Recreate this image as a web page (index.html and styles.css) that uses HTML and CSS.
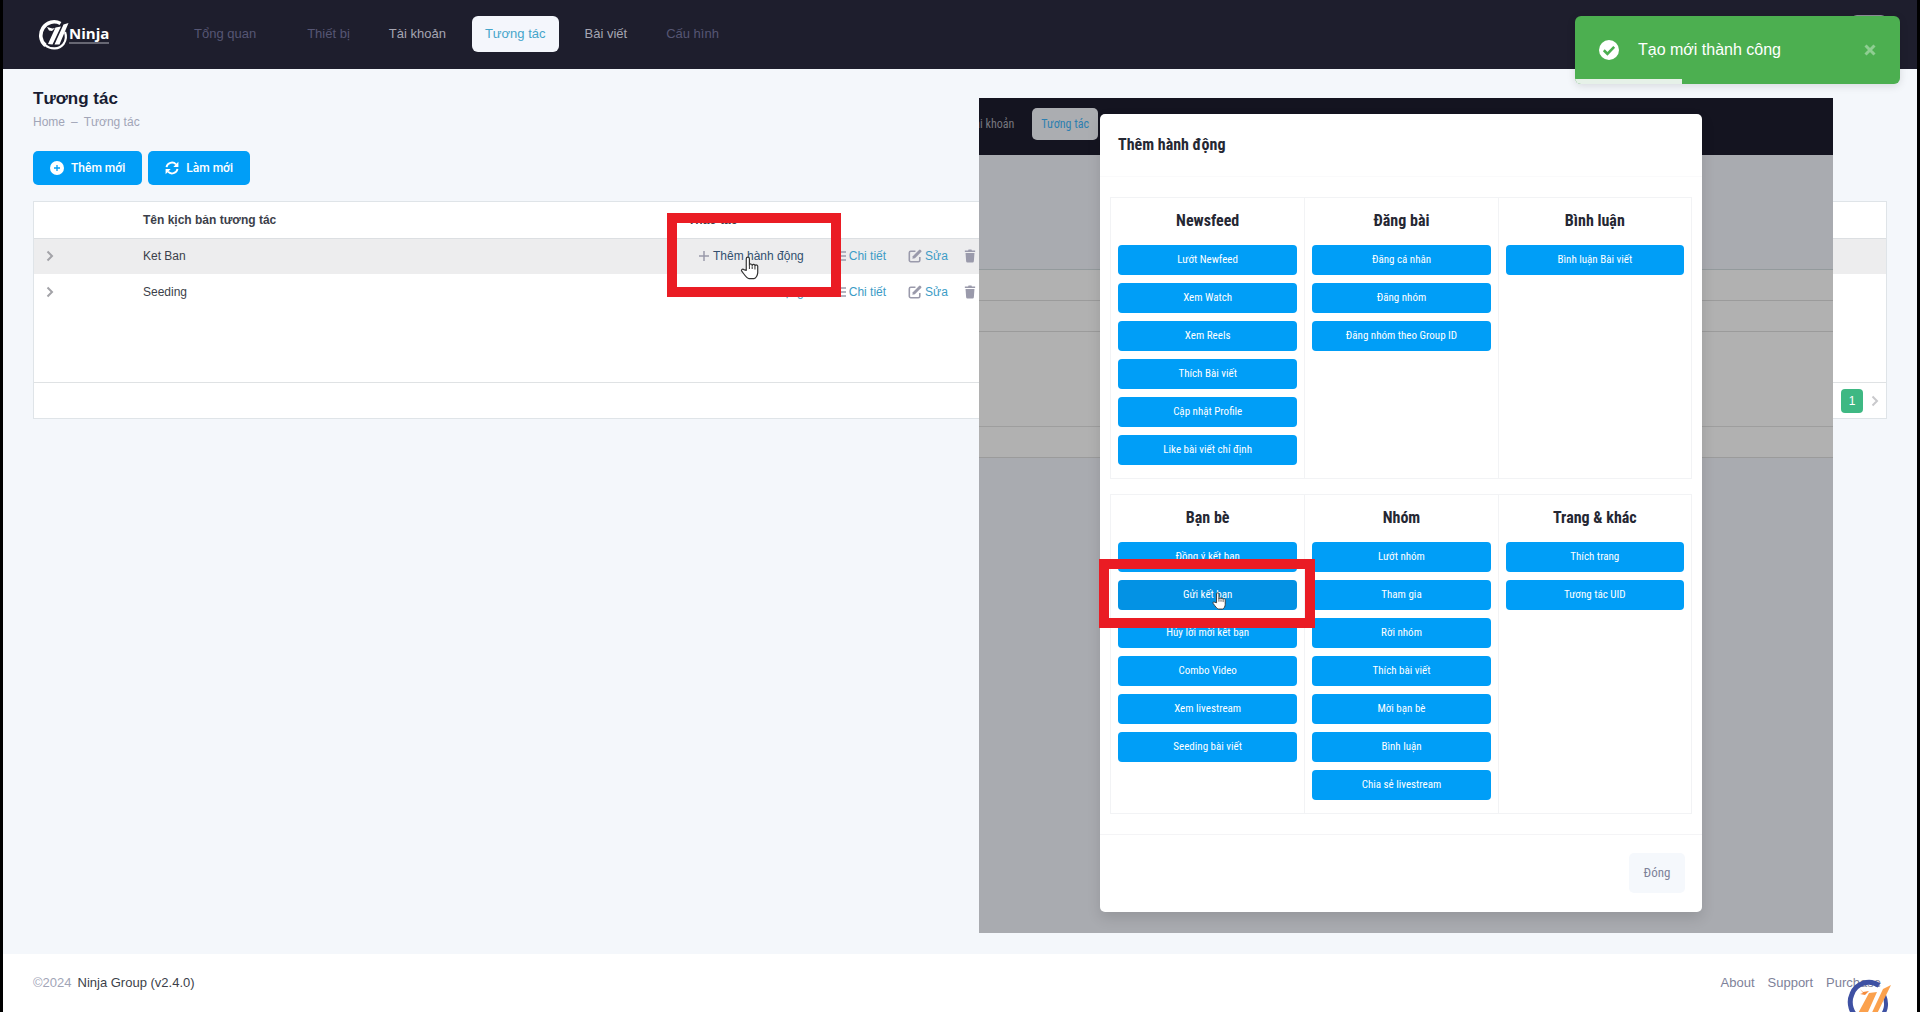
FILE: index.html
```html
<!DOCTYPE html>
<html lang="vi">
<head>
<meta charset="utf-8">
<title>Tương tác</title>
<meta name="viewport" content="width=device-width, initial-scale=1">
<link rel="stylesheet" href="styles.css">
</head>
<body>
<svg class="defs" aria-hidden="true">
  <symbol id="plus" viewBox="0 0 12 12"><path d="M6 1v10M1 6h10" fill="none" stroke="currentColor" stroke-width="1.5"/></symbol>
  <symbol id="list" viewBox="0 0 12 12"><path d="M0 2h2M4 2h8M0 6h2M4 6h8M0 10h2M4 10h8" fill="none" stroke="currentColor" stroke-width="1.6"/></symbol>
  <symbol id="edit" viewBox="0 0 16 16"><path d="M8.500 2.500H3.200A1.700 1.700 0 0 0 1.500 4.200v8.600a1.700 1.700 0 0 0 1.700 1.700h8.600a1.700 1.700 0 0 0 1.700-1.700V9" fill="none" stroke="currentColor" stroke-width="1.800"/><path d="M5.500 8.200 12.600 1.100a1.300 1.300 0 0 1 1.800 0l.6.6a1.300 1.300 0 0 1 0 1.800L7.900 10.600l-2.900.6z" fill="currentColor"/></symbol>
  <symbol id="trash" viewBox="0 0 14 16"><path d="M1 1.500h3.800L5.300.5h3.400l.5 1H13v1.800H1zM1.800 4.500h10.400l-.7 9.600a1.500 1.500 0 0 1-1.500 1.400H4a1.500 1.500 0 0 1-1.500-1.400z" fill="currentColor"/></symbol>
  <symbol id="chevron" viewBox="0 0 8 12"><path d="M1.500 1.500 6 6l-4.500 4.500" fill="none" stroke="currentColor" stroke-width="2"/></symbol>
  <symbol id="hand" viewBox="0 0 20 26"><path d="M6.500 15.500V3a1.700 1.700 0 0 1 3.400 0v7a1.500 1.500 0 0 1 3 .3 1.500 1.500 0 0 1 3 .6 1.500 1.500 0 0 1 3 .8v6.300c0 2.500-2 6.500-4 6.500H9.500C7 24.500 4 19.500 1.600 16.400c-1-1.400.9-2.800 2.200-1.700z" fill="#fff" stroke="#333" stroke-width="1.300" stroke-linejoin="round"/><path d="M9.900 10v4M12.900 11v3M15.900 11.500v3" stroke="#333" stroke-width="1.100"/></symbol>
</svg>

<header class="topbar">
  <a class="logo" href="#" aria-label="Ninja">
    <svg width="31" height="32" viewBox="0 0 31 32" aria-hidden="true">
      <path d="M22.500 4.500A13 13 0 0 0 5 9C1.500 14.500 2 22 7.500 26.500" fill="none" stroke="#fff" stroke-width="3.600"/>
      <path d="M7 26c6 5 14 4.500 18.500-1 2.500-3.500 3-8 1.500-12" fill="none" stroke="#fff" stroke-width="2.200"/>
      <path d="M10 25 17.500 8.500l5.500-1L14.500 25.500zM16.500 25.500 25.500 5.500l5-1.500L21.500 25.500z" fill="#fff"/>
      <path d="m9 8 5.500 1.500 2.500-.5-3 3-3-.5z" fill="#fff"/>
    </svg>
    <span class="logo-name">Ninja</span>
  </a>
  <nav class="nav">
    <a class="dim" href="#">Tổng quan</a>
    <a class="dim" href="#">Thiết bị</a>
    <a href="#">Tài khoản</a>
    <a class="active" href="#">Tương tác</a>
    <a href="#">Bài viết</a>
    <a class="dim" href="#">Cấu hình</a>
  </nav>
  <span class="avatar"></span>
</header>

<main class="content">
  <h1>Tương tác</h1>
  <p class="crumbs"><a href="#">Home</a><span>–</span><span>Tương tác</span></p>
  <div class="toolbar">
    <button class="btn" type="button">
      <svg width="14" height="14" viewBox="0 0 14 14" aria-hidden="true"><circle cx="7" cy="7" r="7" fill="#fff"/><path d="M7 4v6M4 7h6" stroke="#009ef7" stroke-width="1.300"/></svg>
      Thêm mới
    </button>
    <button class="btn" type="button">
      <svg width="14" height="14" viewBox="0 0 14 14" aria-hidden="true"><path d="M1.500 6.200A5.600 5.600 0 0 1 11 3.300M12.500 7.800A5.600 5.600 0 0 1 3 10.700" fill="none" stroke="#fff" stroke-width="1.900"/><path d="M13.400.8v5.100H8.300zM.6 13.200V8.100h5.100z" fill="#fff"/></svg>
      Làm mới
    </button>
  </div>

  <section class="panel">
    <div class="panel-body">
      <table class="grid">
        <thead>
          <tr><th class="c-open"></th><th class="c-name">Tên kịch bản tương tác</th><th>Thao tác</th></tr>
        </thead>
        <tbody>
          <tr class="hover">
            <td class="c-open"><svg width="8" height="12"><use href="#chevron"/></svg></td>
            <td>Ket Ban</td>
            <td><div class="actions">
              <a class="add strong" href="#"><svg width="12" height="12"><use href="#plus"/></svg>Thêm hành động</a>
              <a class="more" href="#"><svg width="12" height="12"><use href="#list"/></svg>Chi tiết</a>
              <a href="#"><svg width="14" height="14"><use href="#edit"/></svg>Sửa</a>
              <a class="remove" href="#" aria-label="Xóa"><svg width="12" height="14"><use href="#trash"/></svg></a>
            </div></td>
          </tr>
          <tr>
            <td class="c-open"><svg width="8" height="12"><use href="#chevron"/></svg></td>
            <td>Seeding</td>
            <td><div class="actions">
              <a class="add" href="#"><svg width="12" height="12"><use href="#plus"/></svg>Thêm hành động</a>
              <a class="more" href="#"><svg width="12" height="12"><use href="#list"/></svg>Chi tiết</a>
              <a href="#"><svg width="14" height="14"><use href="#edit"/></svg>Sửa</a>
              <a class="remove" href="#" aria-label="Xóa"><svg width="12" height="14"><use href="#trash"/></svg></a>
            </div></td>
          </tr>
        </tbody>
      </table>
    </div>
    <div class="pager">
      <button class="page-now" type="button">1</button>
      <button class="page-next" type="button" aria-label="Trang sau"><svg width="8" height="12"><use href="#chevron"/></svg></button>
    </div>
  </section>
</main>

<footer class="footer">
  <p><span class="year">©2024</span><a href="#">Ninja Group (v2.4.0)</a></p>
  <nav class="foot-nav"><a href="#">About</a><a href="#">Support</a><a href="#">Purchase</a></nav>
</footer>

<svg class="brand" width="46" height="46" viewBox="0 0 46 46" aria-hidden="true">
  <path d="M33 6.500A18 18 0 0 0 6 15C2 24 5 35 14 40" fill="none" stroke="#3e51a3" stroke-width="5"/>
  <path d="M38 16c4 9 2 18-5 23" fill="none" stroke="#3e51a3" stroke-width="4"/>
  <path d="m9 40 14-26 8-1L18 42zM22 42 37 10l8-4-18 37z" fill="#fba14d"/>
  <path d="m14 10 3 3 6-1-4 4-5-1 3-1z" fill="#f58a3c"/>
</svg>

<section class="inset">
  <div class="inset-top">
    <nav class="inset-nav"><a href="#">ài khoản</a><a class="active" href="#">Tương tác</a></nav>
  </div>
  <div class="inset-page">
    <div class="inset-space"></div>
    <div class="inset-table">
      <div class="row"></div><div class="row"></div><div class="rows"></div><div class="row"></div>
    </div>
  </div>

  <div class="modal" role="dialog" aria-labelledby="modal-title">
    <h2 id="modal-title">Thêm hành động</h2>
    <div class="modal-body">
      <div class="group">
        <div class="col">
          <h3>Newsfeed</h3>
          <button type="button">Lướt Newfeed</button>
          <button type="button">Xem Watch</button>
          <button type="button">Xem Reels</button>
          <button type="button">Thích Bài viết</button>
          <button type="button">Cập nhật Profile</button>
          <button type="button">Like bài viết chỉ định</button>
        </div>
        <div class="col">
          <h3>Đăng bài</h3>
          <button type="button">Đăng cá nhân</button>
          <button type="button">Đăng nhóm</button>
          <button type="button">Đăng nhóm theo Group ID</button>
        </div>
        <div class="col">
          <h3>Bình luận</h3>
          <button type="button">Bình luận Bài viết</button>
        </div>
      </div>
      <div class="group">
        <div class="col">
          <h3>Bạn bè</h3>
          <button type="button">Đồng ý kết bạn</button>
          <button class="hovered" type="button">Gửi kết bạn</button>
          <button type="button">Hủy lời mời kết bạn</button>
          <button type="button">Combo Video</button>
          <button type="button">Xem livestream</button>
          <button type="button">Seeding bài viết</button>
        </div>
        <div class="col">
          <h3>Nhóm</h3>
          <button type="button">Lướt nhóm</button>
          <button type="button">Tham gia</button>
          <button type="button">Rời nhóm</button>
          <button type="button">Thích bài viết</button>
          <button type="button">Mời bạn bè</button>
          <button type="button">Bình luận</button>
          <button type="button">Chia sẻ livestream</button>
        </div>
        <div class="col">
          <h3>Trang &amp; khác</h3>
          <button type="button">Thích trang</button>
          <button type="button">Tương tác UID</button>
        </div>
      </div>
    </div>
    <div class="modal-foot"><button type="button">Đóng</button></div>
  </div>
</section>

<div class="mark mark-row"></div>
<svg class="hand hand-row" width="19" height="24"><use href="#hand"/></svg>
<div class="mark mark-modal"></div>
<svg class="hand hand-modal" width="14" height="20"><use href="#hand"/></svg>

<div class="toast" role="status">
  <svg width="20" height="20" viewBox="0 0 20 20" aria-hidden="true"><circle cx="10" cy="10" r="10" fill="#fff"/><path d="m4.800 10.300 3.600 3.500 6.800-7" fill="none" stroke="#4caf50" stroke-width="2.600"/></svg>
  <span class="toast-text">Tạo mới thành công</span>
  <button class="toast-close" type="button" aria-label="Đóng"><svg width="12" height="12" viewBox="0 0 12 12"><path d="m1.500 1.500 9 9m0-9-9 9" stroke="currentColor" stroke-width="3"/></svg></button>
</div>
</body>
</html>
```
FILE: styles.css
```css
* { box-sizing: border-box; }
html { background: #000; }
body {
  position: relative;
  display: flex;
  flex-direction: column;
  min-height: 100vh;
  margin: 0;
  border: solid #000;
  border-width: 0 3px;
  overflow: hidden;
  background: #f4f7fb;
  color: #3c3f4a;
  font: 12px/18px "Liberation Sans", Arial, sans-serif;
}
a { color: inherit; text-decoration: none; }
button { border: 0; padding: 0; font: inherit; color: inherit; cursor: pointer; }
svg { flex: none; }
.defs { position: absolute; width: 0; height: 0; }

/* top bar */
.topbar {
  display: flex;
  align-items: center;
  height: 69px;
  padding: 0 30px 0 35px;
  background: #1e1e2d;
}
.logo { display: flex; align-items: center; width: 143px; color: #fff; }
.logo-name {
  border-bottom: 2px solid #676773;
  font: 700 15px/17px "Open Sans", sans-serif;
}
.nav { display: flex; gap: 13px; margin-top: -2px; font-size: 13px; color: #a5a5b2; }
.nav a { padding: 9px 13px; border-radius: 6px; }
.nav .dim { color: #565674; }
.nav .dim + .dim { margin-left: 12px; }
.nav .active { background: #f4f6fc; color: #45a5cb; }
.avatar { width: 36px; height: 40px; margin-left: auto; border-radius: 6px; background: #8d8d98; }

/* page content */
.content { flex: 1; padding: 18px 30px; }
h1 { margin: 0; font-size: 17px; line-height: 24px; color: #181c32; }
.crumbs { display: flex; gap: 6px; margin: 2px 0 20px; color: #a1a5b7; }
.toolbar { display: flex; gap: 6px; margin-bottom: 16px; }
.btn {
  display: flex;
  align-items: center;
  gap: 7px;
  height: 34px;
  padding: 0 17px;
  border-radius: 5px;
  background: #009ef7;
  color: #fff;
  font: 500 12px/18px Roboto, sans-serif;
}
.panel { border: 1px solid #dfe4e8; background: #fff; }
.panel-body { min-height: 180px; }
.grid { width: 100%; border-collapse: collapse; table-layout: fixed; }
.grid th, .grid td { height: 36px; padding: 0; text-align: left; }
.grid thead th { border-bottom: 1px solid #dcdfe2; }
.grid .c-open { width: 109px; padding-left: 12px; color: #a3a3a8; }
.grid .c-open svg, .pager svg { display: block; }
.c-name { width: 545px; }
.hover { background: #ededee; }
.actions { display: flex; gap: 22px; padding-left: 10px; color: #3c9cc6; }
.actions a { display: flex; align-items: center; gap: 3px; }
.actions svg { color: #9a9aab; }
.actions .strong { color: #33506f; }
.actions .more { margin-left: 8px; }
.actions .remove { margin-left: -6px; }
.pager {
  display: flex;
  justify-content: flex-end;
  align-items: center;
  gap: 8px;
  height: 36px;
  padding-right: 7px;
  border-top: 1px solid #dfe2e4;
}
.page-now { width: 22px; height: 24px; border-radius: 4px; background: #3eb883; color: #fff; }
.page-next { background: none; color: #c9c9cc; }

.footer {
  display: flex;
  justify-content: space-between;
  align-items: center;
  height: 58px;
  padding: 0 36px 0 30px;
  background: #fff;
  font-size: 13px;
}
.footer p { display: flex; gap: 6px; margin: 0; }
.year { color: #a1a5b7; }
.foot-nav { display: flex; gap: 13px; color: #7e8299; }
.brand { position: absolute; right: 25px; bottom: -13px; }

/* second window laid over the page */
.inset {
  position: absolute;
  left: 976px;
  top: 98px;
  display: flex;
  flex-direction: column;
  width: 854px;
  height: 835px;
  overflow: hidden;
  background: #a9abb0;
  font: 11px/16px "Roboto Condensed", Roboto, sans-serif;
}
.inset-top { height: 57px; padding-top: 10px; background: #141420; }
.inset-nav {
  display: flex;
  justify-content: flex-end;
  align-items: center;
  gap: 18px;
  width: 119px;
  font-size: 12px;
  white-space: nowrap;
  color: #77777f;
}
.inset-nav .active { padding: 8px 9px; border-radius: 5px; background: #abadb1; color: #2d7fb0; }
.inset-space { height: 114px; }
.inset-table { border-top: 1px solid #939a9c; background: #b1b1b1; }
.inset-table .row { height: 31px; border-bottom: 1px solid #9b9b9b; }
.inset-table .rows { height: 95px; border-bottom: 1px solid #9e9e9e; }

.modal {
  position: absolute;
  left: 121px;
  top: 16px;
  width: 602px;
  border-radius: 5px;
  background: #fff;
  box-shadow: 0 6px 14px rgba(0, 0, 0, .12);
  color: #252733;
}
.modal h2 { margin: 0; padding: 19px 18px; border-bottom: 1px solid #fafafb; font-size: 16px; line-height: 24px; }
.modal-body { display: grid; gap: 15px; padding: 20px 10px; }
.group { display: grid; grid-template-columns: repeat(3, 1fr); border: 1px solid #f2f3f5; }
.col { display: flex; flex-direction: column; gap: 8px; padding: 11px 7px 13px; }
.col + .col { border-left: 1px solid #f2f3f5; }
.col h3 { margin: 0 0 4px; font-size: 16px; line-height: 24px; text-align: center; }
.col button { height: 30px; border-radius: 4px; background: #009ef7; color: #fff; }
.col .hovered { background: #0392e4; }
.modal-foot { display: flex; justify-content: flex-end; padding: 18px 17px 19px; border-top: 1px solid #f4f4f6; }
.modal-foot button { width: 56px; height: 40px; border-radius: 5px; background: #f5f8fc; color: #7e8299; font-size: 13px; }

/* call-outs and pointers */
.mark { position: absolute; border: 10px solid #ea1c24; }
.mark-row { left: 664px; top: 213px; width: 174px; height: 84px; }
.mark-modal { left: 1096px; top: 559px; width: 216px; height: 69px; }
.hand { position: absolute; }
.hand-row { left: 737px; top: 256px; }
.hand-modal { left: 1209px; top: 591px; }

.toast {
  position: absolute;
  right: 17px;
  top: 16px;
  display: flex;
  align-items: center;
  width: 325px;
  height: 68px;
  padding: 0 24px;
  border-radius: 6px;
  overflow: hidden;
  background: #4caf50;
  box-shadow: 0 2px 8px rgba(0, 0, 0, .12);
  color: #fff;
  font-size: 16px;
}
.toast::after {
  content: "";
  position: absolute;
  left: 0;
  bottom: 0;
  width: 33%;
  height: 5px;
  background: #e6f1e8;
}
.toast-text { margin-left: 19px; }
.toast-close { margin-left: auto; background: none; color: #8fce92; line-height: 12px; }
```
